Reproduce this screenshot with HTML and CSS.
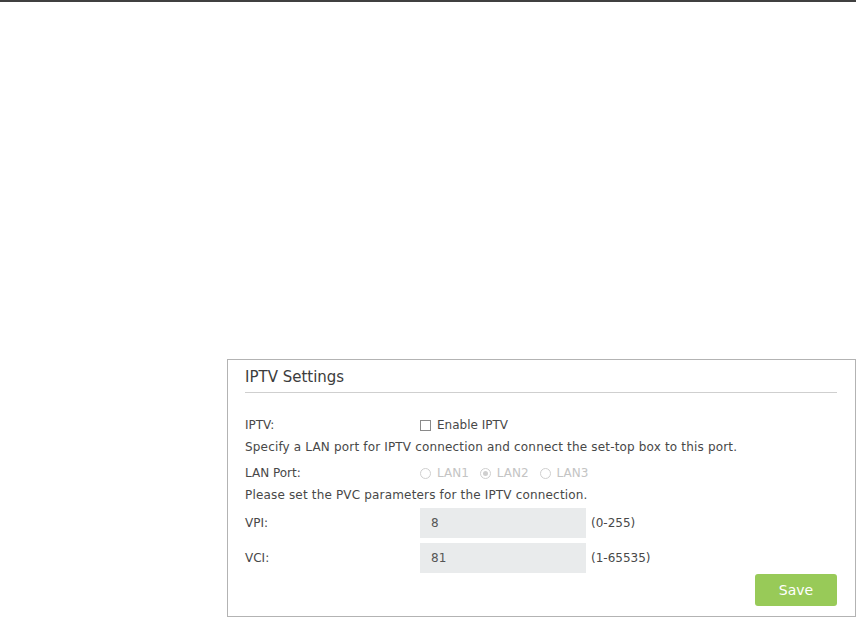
FILE: index.html
```html
<!DOCTYPE html>
<html lang="en">
<head>
    <meta charset="UTF-8">
    <meta name="viewport" content="width=device-width, initial-scale=1.0">
    <title>IPTV Settings</title>
    <link rel="stylesheet" href="styles.css">
</head>
<body>
    <div class="top-bar"></div>

    <div class="page">
        <div class="panel">
            <h2 class="panel-title">IPTV Settings</h2>

            <div class="form">
                <div class="row">
                    <span class="label">IPTV:</span>
                    <label class="check"><span class="check-box"></span>Enable IPTV</label>
                </div>
                <p class="note">Specify a LAN port for IPTV connection and connect the set-top box to this port.</p>

                <div class="row row-lan">
                    <span class="label">LAN Port:</span>
                    <div class="radios">
                        <label class="radio"><span class="radio-dot"></span>LAN1</label>
                        <label class="radio"><span class="radio-dot checked"></span>LAN2</label>
                        <label class="radio"><span class="radio-dot"></span>LAN3</label>
                    </div>
                </div>
                <p class="note">Please set the PVC parameters for the IPTV connection.</p>

                <div class="row row-input">
                    <span class="label">VPI:</span>
                    <input class="text-input" type="text" value="8">
                    <span class="hint">(0-255)</span>
                </div>
                <div class="row row-input second">
                    <span class="label">VCI:</span>
                    <input class="text-input" type="text" value="81">
                    <span class="hint">(1-65535)</span>
                </div>

                <div class="actions">
                    <button class="save-button">Save</button>
                </div>
            </div>
        </div>
    </div>
</body>
</html>
```

FILE: styles.css
```css
* {
    margin: 0;
    padding: 0;
    box-sizing: border-box;
}

body {
    font-family: "DejaVu Sans", Verdana, sans-serif;
    font-size: 12px;
    color: #484848;
    background: #fff;
}

.top-bar {
    width: 856px;
    height: 2px;
    background: #404040;
}

.page {
    padding: 357px 0 0 227px;
}

.panel {
    width: 629px;
    height: 258px;
    border: 1px solid #b3b3b3;
    padding: 0 18px 0 17px;
}

.panel-title {
    font-size: 15px;
    font-weight: normal;
    color: #3c3c3c;
    line-height: 22px;
    padding: 6px 0 4px 0;
    border-bottom: 1px solid #cfcfcf;
}

.form {
    padding-top: 21px;
}

.row {
    display: flex;
    align-items: center;
    height: 22px;
}

.label {
    width: 175px;
    flex-shrink: 0;
}

.note {
    line-height: 22px;
    letter-spacing: 0.17px;
}

.row-lan {
    margin-top: 4px;
}

.check {
    display: flex;
    align-items: center;
    gap: 6px;
}

.check-box {
    width: 11px;
    height: 11px;
    border: 1px solid #8a8a8a;
    background: #fff;
}

.radios {
    display: flex;
    gap: 11px;
    color: #c4c4c4;
}

.radio {
    display: flex;
    align-items: center;
    gap: 6px;
}

.radio-dot {
    width: 11px;
    height: 11px;
    border: 1px solid #cfcfcf;
    border-radius: 50%;
    display: flex;
    align-items: center;
    justify-content: center;
}

.radio-dot.checked::after {
    content: "";
    width: 5px;
    height: 5px;
    border-radius: 50%;
    background: #cfcfcf;
}

.row-input {
    height: 30px;
    margin-top: 2px;
}

.row-input.second {
    margin-top: 5px;
}

.text-input {
    width: 166px;
    height: 30px;
    border: none;
    background: #e9ebec;
    padding: 0 11px;
    font-family: inherit;
    font-size: 12px;
    color: #555;
    outline: none;
}

.hint {
    margin-left: 5px;
}

.actions {
    display: flex;
    justify-content: flex-end;
    margin-top: 1px;
}

.save-button {
    width: 82px;
    height: 32px;
    border: none;
    border-radius: 3px;
    background: #98ca58;
    color: #fff;
    font-family: inherit;
    font-size: 14px;
    cursor: pointer;
}
```
